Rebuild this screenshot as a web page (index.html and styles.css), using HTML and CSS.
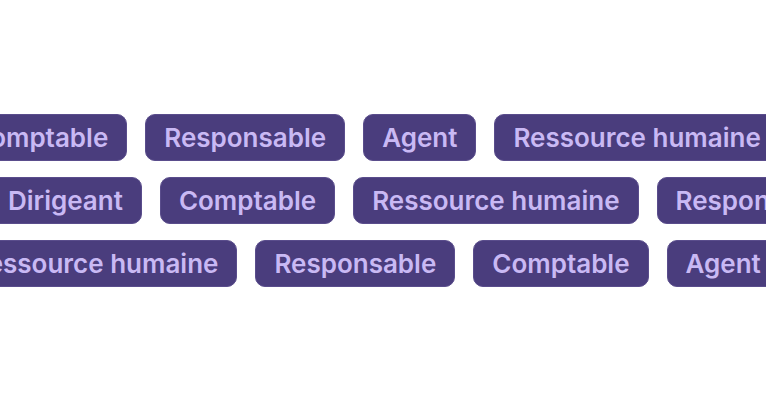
FILE: index.html
```html
<!DOCTYPE html>
<html lang="fr">
<head>
<meta charset="utf-8">
<link rel="stylesheet" href="styles.css">
</head>
<body>
<main class="stage">
  <div class="row row-1">
    <span class="tag">Comptable</span>
    <span class="tag">Responsable</span>
    <span class="tag">Agent</span>
    <span class="tag">Ressource humaine</span>
    <span class="tag">Dirigeant</span>
  </div>
  <div class="row row-2">
    <span class="tag">Dirigeant</span>
    <span class="tag">Comptable</span>
    <span class="tag">Ressource humaine</span>
    <span class="tag">Responsable</span>
    <span class="tag">Agent</span>
  </div>
  <div class="row row-3">
    <span class="tag">Ressource humaine</span>
    <span class="tag">Responsable</span>
    <span class="tag">Comptable</span>
    <span class="tag">Agent</span>
    <span class="tag">Dirigeant</span>
  </div>
</main>
</body>
</html>
```
FILE: styles.css
```css
html, body {
  margin: 0;
  padding: 0;
  background: #ffffff;
}
body {
  width: 766px;
  height: 400px;
  overflow: hidden;
  font-family: Inter, "Noto Sans", sans-serif;
}
.stage {
  height: 400px;
  display: flex;
  flex-direction: column;
  justify-content: center;
  gap: 16px;
  overflow: hidden;
}
.row {
  display: flex;
  gap: 18px;
  white-space: nowrap;
}
.row-1 { margin-left: -48px; }
.row-2 { margin-left: -11px; }
.row-3 { margin-left: -48px; }
.tag {
  flex: none;
  height: 47px;
  box-sizing: border-box;
  display: flex;
  align-items: center;
  padding: 0 18px;
  background: #4a3d7d;
  color: #c9b9f4;
  border: 1px solid #5a4d8c;
  border-radius: 10px;
  font-size: 26px;
  font-weight: 560;
}
```
